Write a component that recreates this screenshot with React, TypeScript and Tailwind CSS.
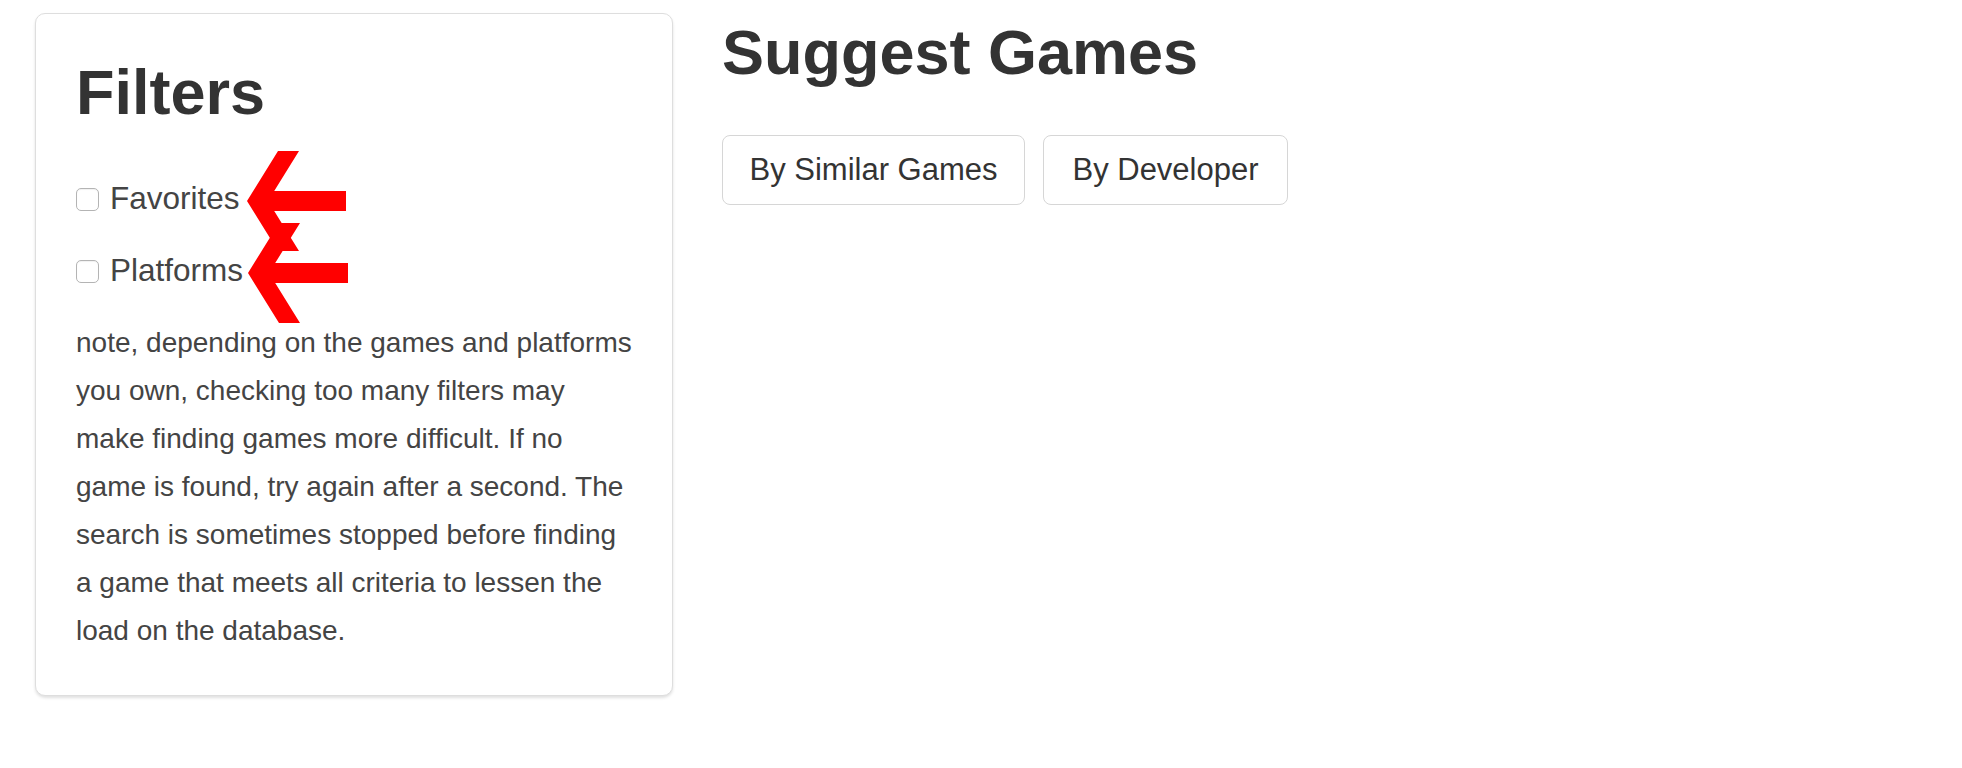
import { useState } from 'react'

const NOTE =
  'note, depending on the games and platforms you own, checking too many filters may make finding games more difficult. If no game is found, try again after a second. The search is sometimes stopped before finding a game that meets all criteria to lessen the load on the database.'

interface FilterRowProps {
  label: string
}

const FilterRow = ({ label }: FilterRowProps) => {
  const [checked, setChecked] = useState(false)
  return (
    <label className="flex h-[48px] items-center gap-[11px] text-[31.5px] leading-none text-[#444]">
      <input
        type="checkbox"
        checked={checked}
        onChange={() => setChecked(!checked)}
        className="h-[23px] w-[23px] appearance-none rounded-[5px] border border-[#b4b4b4] bg-white shadow-[inset_0_1px_1px_rgba(0,0,0,0.06)]"
      />
      <span>{label}</span>
    </label>
  )
}

// red annotation arrows drawn over the card
const Arrows = () => (
  <svg
    className="pointer-events-none absolute left-[204px] top-[131px]"
    width="110"
    height="185"
    viewBox="0 0 110 185"
  >
    <g fill="#ff0000">
      <polygon points="7,56 38,6 59,6 28,56 59,106 38,106" />
      <rect x="22" y="46" width="84" height="20" />
      <polygon points="8,128 39,78 60,78 29,128 60,178 39,178" />
      <rect x="23" y="118" width="85" height="20" />
    </g>
  </svg>
)

export default function App() {
  return (
    <div className="flex min-h-[768px] items-start gap-[49px] bg-white pl-[35px] pt-[13px] font-['Liberation_Sans',Arial,sans-serif]">
      {/* Filters card */}
      <div className="relative w-[638px] shrink-0 rounded-[10px] border border-[#dedede] bg-white pb-[40px] pl-[40px] pr-[38px] pt-[44px] shadow-[0_2px_3px_rgba(0,0,0,0.12)]">
        <h1 className="text-[63px] font-bold leading-[69px] text-[#333]">Filters</h1>
        <div className="mt-[48px] flex flex-col gap-[24px]">
          <FilterRow label="Favorites" />
          <FilterRow label="Platforms" />
        </div>
        <p className="mt-[24px] w-[558px] text-[28px] leading-[48px] text-[#444]">{NOTE}</p>
        <Arrows />
      </div>

      {/* Suggest column */}
      <div className="flex flex-col pt-[5px]">
        <h1 className="text-[63px] font-bold leading-[69px] text-[#333]">Suggest Games</h1>
        <div className="mt-[48px] flex gap-[18px]">
          <button className="h-[70px] w-[303px] rounded-[8px] border border-[#d6d6d6] bg-white text-[31px] text-[#333]">
            By Similar Games
          </button>
          <button className="h-[70px] w-[245px] rounded-[8px] border border-[#d6d6d6] bg-white text-[31px] text-[#333]">
            By Developer
          </button>
        </div>
      </div>
    </div>
  )
}
